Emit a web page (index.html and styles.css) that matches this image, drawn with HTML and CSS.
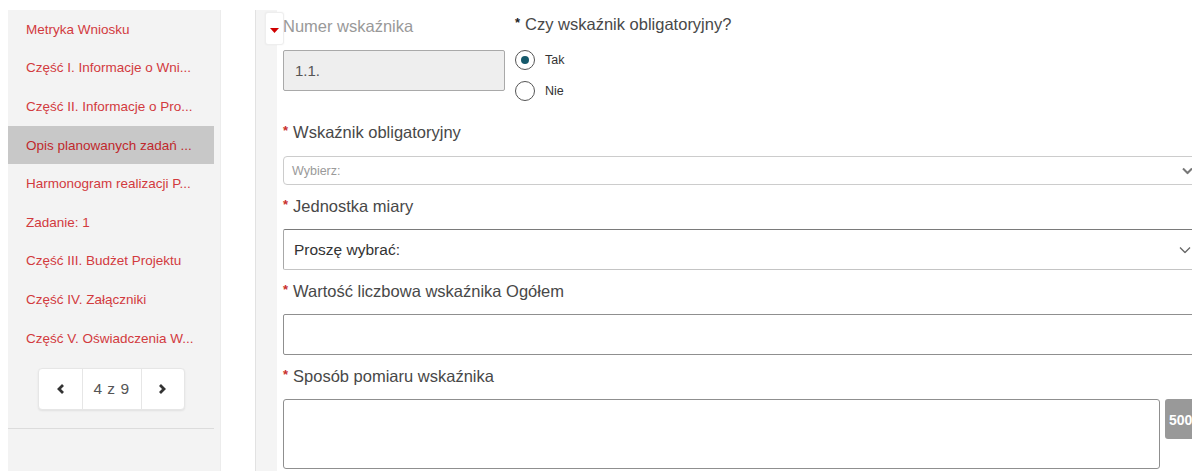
FILE: index.html
```html
<!DOCTYPE html>
<html lang="pl">
<head>
<meta charset="utf-8">
<title>Wniosek – wskaźniki</title>
<link rel="stylesheet" href="styles.css">
</head>
<body>
<div class="page">
  <aside class="sidebar">
    <ul class="nav">
      <li class="nav-item"><a href="#">Metryka Wniosku</a></li>
      <li class="nav-item"><a href="#">Część I. Informacje o Wni...</a></li>
      <li class="nav-item"><a href="#">Część II. Informacje o Pro...</a></li>
      <li class="nav-item active"><a href="#">Opis planowanych zadań ...</a></li>
      <li class="nav-item"><a href="#">Harmonogram realizacji P...</a></li>
      <li class="nav-item"><a href="#">Zadanie: 1</a></li>
      <li class="nav-item"><a href="#">Część III. Budżet Projektu</a></li>
      <li class="nav-item"><a href="#">Część IV. Załączniki</a></li>
      <li class="nav-item"><a href="#">Część V. Oświadczenia W...</a></li>
    </ul>
    <div class="pager">
      <button class="pager-btn" type="button" aria-label="Poprzednia">
        <svg width="9" height="12" viewBox="0 0 9 12"><path d="M7 2 L3 6 L7 10" fill="none" stroke="#333" stroke-width="2.8"/></svg>
      </button>
      <span class="pager-info">4 z 9</span>
      <button class="pager-btn" type="button" aria-label="Następna">
        <svg width="9" height="12" viewBox="0 0 9 12"><path d="M2 2 L6 6 L2 10" fill="none" stroke="#333" stroke-width="2.8"/></svg>
      </button>
    </div>
    <hr class="sidebar-rule">
  </aside>

  <main class="main">
    <div class="gutter"></div>
    <button class="collapse-toggle" type="button" aria-label="Zwiń">
      <svg width="9" height="5" viewBox="0 0 9 5"><path d="M0 0 H9 L4.5 5 Z" fill="#d00000"/></svg>
    </button>
    <form class="form">
      <div class="row-top">
        <div class="field">
          <label class="label label-muted">Numer wskaźnika</label>
          <div class="input input-readonly">1.1.</div>
        </div>
        <div class="field">
          <label class="label"><span class="star star-dark">*</span>Czy wskaźnik obligatoryjny?</label>
          <div class="radios">
            <label class="radio"><span class="radio-circle checked"></span><span class="radio-text">Tak</span></label>
            <label class="radio"><span class="radio-circle"></span><span class="radio-text">Nie</span></label>
          </div>
        </div>
      </div>

      <div class="group group-first">
        <label class="label label-gap"><span class="star">*</span>Wskaźnik obligatoryjny</label>
        <div class="select select-small">
          <span class="placeholder">Wybierz:</span>
          <svg class="chev chev-bold" width="11" height="7" viewBox="0 0 11 7"><path d="M1 1 L5.5 5.5 L10 1" fill="none" stroke="#777" stroke-width="2"/></svg>
        </div>
      </div>

      <div class="group">
        <label class="label"><span class="star">*</span>Jednostka miary</label>
        <div class="select select-native">
          <span class="value">Proszę wybrać:</span>
          <svg class="chev" width="12" height="7" viewBox="0 0 12 7"><path d="M1 1 L6 6 L11 1" fill="none" stroke="#666" stroke-width="1.3"/></svg>
        </div>
      </div>

      <div class="group">
        <label class="label"><span class="star">*</span>Wartość liczbowa wskaźnika Ogółem</label>
        <div class="input input-text"></div>
      </div>

      <div class="group">
        <label class="label"><span class="star">*</span>Sposób pomiaru wskaźnika</label>
        <div class="textarea-row">
          <div class="textarea"></div>
          <span class="counter">500</span>
        </div>
      </div>
    </form>
  </main>
</div>
</body>
</html>
```

FILE: styles.css
```css
* { box-sizing: border-box; }

html, body {
  margin: 0;
  padding: 0;
  background: #fff;
}

body {
  font-family: "Liberation Sans", Arial, sans-serif;
  color: #333;
  overflow: hidden;
}

.page {
  display: flex;
  align-items: stretch;
  height: 471px;
  padding-top: 10px;
  overflow: hidden;
}

/* ---------- sidebar ---------- */
.sidebar {
  flex: 0 0 213px;
  margin-left: 8px;
  padding-right: 6px;
  background: #f3f3f3;
  border-right: 1px solid #ececec;
}

.nav {
  list-style: none;
  margin: 0;
  padding: 0;
}

.nav-item {
  height: 38.6px;
  display: flex;
  align-items: center;
  padding-left: 18px;
  white-space: nowrap;
}

.nav-item a {
  color: #d23a3e;
  text-decoration: none;
  font-size: 13.5px;
}

.nav-item.active {
  background: #c8c8c8;
}

.nav-item.active a {
  color: #c0292d;
}

.pager {
  display: flex;
  width: 147px;
  height: 42px;
  margin: 11px auto 0;
  background: #fff;
  border: 1px solid #e6e6e6;
  border-radius: 4px;
  box-shadow: 0 1px 2px rgba(0, 0, 0, 0.08);
}

.pager-btn {
  flex: 0 0 43px;
  border: 0;
  background: transparent;
  padding: 0;
  display: flex;
  align-items: center;
  justify-content: center;
}

.pager-btn:last-child {
  flex-basis: 42px;
}

.pager-info {
  flex: 1;
  display: flex;
  align-items: center;
  justify-content: center;
  border-left: 1px solid #e6e6e6;
  border-right: 1px solid #e6e6e6;
  color: #555;
  font-size: 15.5px;
  letter-spacing: 0.5px;
}

.sidebar-rule {
  border: 0;
  border-top: 1px solid #dcdcdc;
  margin: 18px 0 0;
}

/* ---------- main column ---------- */
.main {
  position: relative;
  display: flex;
  margin-left: 34px;
  border-left: 1px solid #e2e2e2;
}

.gutter {
  flex: 0 0 21px;
  background: #f4f4f4;
}

.collapse-toggle {
  position: absolute;
  left: 9px;
  top: 2px;
  width: 19px;
  height: 33px;
  padding: 0;
  background: #fff;
  border: 1px solid #eeeeee;
  border-radius: 3px;
  box-shadow: 0 0 2px rgba(0, 0, 0, 0.06);
  display: flex;
  align-items: center;
  justify-content: flex-start;
  padding-left: 4px;
  padding-top: 3px;
}

.form {
  flex: 0 0 935px;
  padding-left: 6px;
  padding-right: 9px;
  margin: 0;
}

.label {
  display: block;
  font-size: 16.5px;
  line-height: 20px;
  height: 20px;
  color: #484848;
  white-space: nowrap;
}

.label-muted {
  color: #999;
}

.star {
  color: #c9302c;
  font-size: 13px;
  font-weight: bold;
  margin-right: 5px;
  position: relative;
  top: -3px;
}

.star-dark {
  color: #222;
}

.row-top {
  display: grid;
  grid-template-columns: 222px 1fr;
  column-gap: 10px;
}

.row-top .field:first-child .label {
  margin-top: 6px;
}

.row-top .field:last-child .label {
  margin-top: 4px;
}

.input {
  height: 41px;
  border: 1px solid #8f8f8f;
  border-radius: 2px;
  background: #fff;
}

.input-readonly {
  margin-top: 14px;
  background: #eeeeee;
  border-color: #a9a9a9;
  color: #555;
  font-size: 15px;
  line-height: 39px;
  padding-left: 11px;
}

.radios {
  margin-top: 16px;
  display: flex;
  flex-direction: column;
  gap: 11px;
}

.radio {
  display: flex;
  align-items: center;
  height: 20px;
}

.radio-circle {
  width: 20px;
  height: 20px;
  border: 1px solid #555;
  border-radius: 50%;
  background: #fff;
  display: flex;
  align-items: center;
  justify-content: center;
}

.radio-circle.checked::after {
  content: "";
  width: 8px;
  height: 8px;
  border-radius: 50%;
  background: #15596b;
}

.radio-text {
  margin-left: 10px;
  font-size: 12.5px;
  color: #333;
}

.group {
  margin-top: 11px;
}

.group-first {
  margin-top: 21px;
}

.group .label {
  margin-bottom: 13px;
}

.group .label-gap {
  margin-bottom: 14px;
}

.select {
  position: relative;
  display: flex;
  align-items: center;
  background: #fff;
}

.select-small {
  height: 29px;
  border: 1px solid #cccccc;
  border-radius: 4px;
  padding-left: 8px;
}

.placeholder {
  font-size: 12.5px;
  color: #9a9a9a;
}

.select-native {
  height: 41px;
  border: 1px solid #c4c4c4;
  border-top-color: #7a7a7a;
  border-left-color: #a8a8a8;
  border-radius: 2px;
  padding-left: 10px;
}

.value {
  font-size: 15.5px;
  color: #333;
}

.chev {
  position: absolute;
  right: 11px;
  top: 50%;
  transform: translateY(-50%);
}

.chev-bold {
  right: 9px;
}

.textarea-row {
  display: flex;
  align-items: flex-start;
  gap: 5px;
}

.textarea {
  flex: 1;
  height: 70px;
  border: 1px solid #8f8f8f;
  border-radius: 3px;
  background: #fff;
}

.counter {
  flex: 0 0 38px;
  height: 40px;
  background: #999;
  border-radius: 3px;
  color: #fff;
  font-weight: bold;
  font-size: 14px;
  line-height: 42px;
  padding-left: 4px;
}
```
